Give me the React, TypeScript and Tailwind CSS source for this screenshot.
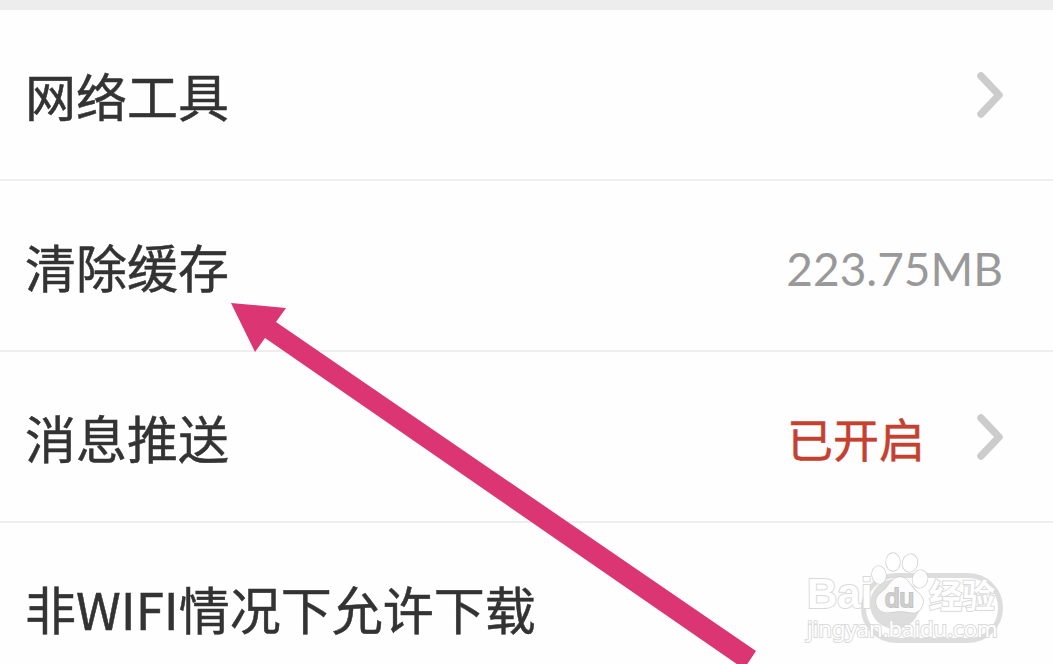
import type { ReactNode } from 'react';

function Chevron() {
  return (
    <svg className="h-12 w-7 shrink-0" viewBox="0 0 28 48" fill="none" aria-hidden="true">
      <path d="M6 5 L24 24 L6 43" stroke="#cccccc" strokeWidth="7.5" strokeLinecap="round" strokeLinejoin="round" />
    </svg>
  );
}

function Row({ children }: { children: ReactNode }) {
  return <li className="h-[171px] shrink-0 border-b-2 border-[#eeeeee]">{children}</li>;
}

const rowBody = 'flex h-full w-full items-center justify-between pl-[25px] pr-[50px] text-left';
const labelText = 'text-[51px] leading-[60px] text-[#333333] [-webkit-text-stroke:0.5px_#333333]';

function Paw() {
  return (
    <svg className="h-[62px] w-[58px] shrink-0" viewBox="0 0 58 62" aria-hidden="true">
      <g fill="#ffffff" fillOpacity="0.9" stroke="#cccccc" strokeWidth="1.3">
        <ellipse cx="8" cy="23" rx="7" ry="9" transform="rotate(-8 8 23)" />
        <ellipse cx="22" cy="10" rx="7" ry="9" />
        <ellipse cx="39" cy="11" rx="7.5" ry="9" transform="rotate(12 39 11)" />
        <ellipse cx="49" cy="27" rx="7.5" ry="9" transform="rotate(12 49 27)" />
        <path d="M29 25 C21 25 18 34 12 39 C5 44 4 49 6 54 C9 61 16 61 22 60 C27 59 32 59 37 60 C44 62 49 60 51 54 C54 48 51 44 45 39 C39 34 37 25 29 25 Z" />
      </g>
    </svg>
  );
}

function Watermark() {
  return (
    <div className="pointer-events-none absolute left-[807px] top-[550px] h-[96px] w-[196px] font-['Noto_Sans','Noto_Sans_CJK_SC',sans-serif] text-white [-webkit-text-stroke:2px_#dadada] [paint-order:stroke_fill]">
      <div className="flex h-[64px] items-end">
        <span className="w-[64px] font-['Liberation_Sans',sans-serif] text-[42px] font-bold leading-[40px]">Bai</span>
        <div className="relative flex">
          <Paw />
          <span className="absolute left-[14px] top-[30px] font-['Liberation_Sans',sans-serif] text-[26px] leading-[32px] text-[#d0d0d0] [-webkit-text-stroke:2px_#c2c2c2]">du</span>
        </div>
        <span className="text-[33px] font-bold leading-[36px]">经验</span>
      </div>
      <div className="text-[22px] leading-[28px]">jingyan.baidu.com</div>
    </div>
  );
}

export default function App() {
  return (
    <main className="relative h-screen overflow-hidden bg-[#fefefe] font-['Noto_Sans_CJK_SC',sans-serif]">
      <ul className="flex flex-col border-t-[10px] border-[#ededed]">
        <Row>
          <button type="button" className={rowBody}>
            <span className={labelText}>网络工具</span>
            <Chevron />
          </button>
        </Row>
        <Row>
          <button type="button" className={rowBody}>
            <span className={labelText}>清除缓存</span>
            <span className="pt-[6px] font-['Lato',sans-serif] text-[46px] leading-[60px] text-[#999999]">223.75MB</span>
          </button>
        </Row>
        <Row>
          <button type="button" className={rowBody}>
            <span className={labelText}>消息推送</span>
            <span className="flex items-center gap-[50px]">
              <span className="text-[46px] leading-[60px] text-[#c5402f] [-webkit-text-stroke:0.5px_#c5402f]">已开启</span>
              <Chevron />
            </span>
          </button>
        </Row>
        <Row>
          <div className={rowBody}>
            <label htmlFor="mobile-download" className={labelText}>非WIFI情况下允许下载</label>
            <span className="relative flex">
              <input
                id="mobile-download"
                type="checkbox"
                role="switch"
                className="h-[70px] w-[142px] appearance-none rounded-full border-[5px] border-[#dddddd] bg-white"
              />
              <span className="pointer-events-none absolute left-[9px] top-[6px] size-[50px] rounded-full bg-[#dddddd]" />
            </span>
          </div>
        </Row>
      </ul>
      <svg className="pointer-events-none absolute left-[231px] top-[302px] h-[370px] w-[530px]" viewBox="231 302 530 370" aria-hidden="true">
        <path d="M231 303 L286 308 L276 322 L756 651 L744 669 L265 338 L255 352 Z" fill="#dc3573" />
      </svg>
      <Watermark />
    </main>
  );
}
